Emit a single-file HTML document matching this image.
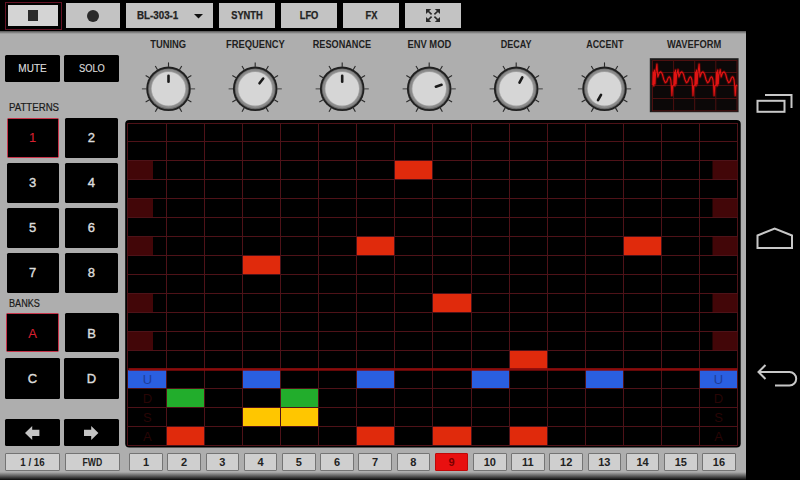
<!DOCTYPE html><html><head><meta charset="utf-8"><style>

html,body{margin:0;padding:0;}
body{width:800px;height:480px;background:#000;position:relative;overflow:hidden;font-family:"Liberation Sans", sans-serif;}
.abs{position:absolute;}
.panel{position:absolute;left:0;top:31px;width:746px;height:449px;background:#aeaeae;}
.tb{position:absolute;top:3px;height:25px;background:#c3c3c3;color:#222;font-weight:bold;font-size:10px;box-sizing:border-box;}
.tt{position:absolute;left:0;right:0;top:6px;text-align:center;line-height:13px;font-size:10px;-webkit-text-stroke:0.25px #222;}
.tt i{display:inline-block;font-style:normal;transform:scaleX(0.93);}
.lbl{position:absolute;top:37.5px;height:14px;width:100px;font-size:10px;font-weight:bold;color:#1e1e1e;text-align:center;line-height:14px;white-space:nowrap;}
.lbl span{display:inline-block;}
.bk{position:absolute;background:#000;color:#dcdcdc;-webkit-text-stroke:0.4px currentColor;border-radius:1.5px;box-sizing:border-box;}
.bt{position:absolute;left:0;right:0;text-align:center;}
.sec{position:absolute;font-size:10px;color:#1a1a1a;line-height:12px;-webkit-text-stroke:0.2px #1a1a1a;}
.sb{position:absolute;top:453.3px;height:18.2px;width:33.5px;background:#cfcfcf;border:1px solid #747474;box-sizing:border-box;border-radius:1px;font-size:11px;font-weight:bold;color:#222;}
.sb span{position:absolute;left:0;right:0;top:1.5px;text-align:center;line-height:12px;}

</style></head><body>
<div class="panel"></div>
<div class="abs" style="left:0;top:31px;width:746px;height:3px;background:linear-gradient(#555,#aeaeae);"></div>
<div class="abs" style="left:0;top:472px;width:746px;height:8px;background:linear-gradient(#aeaeae,#0a0a0a);"></div>
<div class="abs" style="left:4.5px;top:2px;width:57.5px;height:27.5px;box-sizing:border-box;border:1.6px solid #641224;background:#000;"></div>
<div class="abs" style="left:8px;top:5px;width:50px;height:21px;background:#d4d4d4;"></div>
<div class="abs" style="left:28px;top:10px;width:10px;height:11px;background:#2a2a2a;"></div>
<div class="tb" style="left:66px;width:54px;"><div class="abs" style="left:21px;top:6.5px;width:12px;height:12px;border-radius:50%;background:#2a2a2a;"></div></div>
<div class="tb" style="left:126px;width:87px;"><span class="abs" style="left:11px;top:6.2px;font-size:10.2px;line-height:13px;-webkit-text-stroke:0.25px #222;"><i style="display:inline-block;font-style:normal;transform:scaleX(0.96);transform-origin:0 0">BL-303-1</i></span><svg class="abs" style="left:68px;top:10.8px" width="9" height="5"><path d="M0 0H9L4.5 4.6Z" fill="#111"/></svg></div>
<div class="tb" style="left:219px;width:56px;"><div class="tt" style="left:0.8px"><i>SYNTH</i></div></div>
<div class="tb" style="left:281px;width:56px;"><div class="tt" style="left:0px"><i>LFO</i></div></div>
<div class="tb" style="left:343px;width:56px;"><div class="tt" style="left:0px"><i>FX</i></div></div>
<div class="tb" style="left:405px;width:56px;"><svg class="abs" style="left:21px;top:5.8px" width="14" height="13" viewBox="0 0 14 13"><g fill="#2a2a2a"><path d="M0 0H5.2L0 5Z"/><path d="M14 0H8.8L14 5Z"/><path d="M0 13H5.2L0 8Z"/><path d="M14 13H8.8L14 8Z"/></g><g stroke="#2a2a2a" stroke-width="1.7"><path d="M1.5 1.5L5.6 5.3M12.5 1.5L8.4 5.3M1.5 11.5L5.6 7.7M12.5 11.5L8.4 7.7"/></g></svg></div>
<div class="lbl" style="left:118.5px;"><span style="transform:scaleX(0.939)">TUNING</span></div>
<div class="lbl" style="left:205.2px;"><span style="transform:scaleX(0.939)">FREQUENCY</span></div>
<div class="lbl" style="left:292.2px;"><span style="transform:scaleX(0.914)">RESONANCE</span></div>
<div class="lbl" style="left:379.2px;"><span style="transform:scaleX(0.939)">ENV MOD</span></div>
<div class="lbl" style="left:466.20000000000005px;"><span style="transform:scaleX(0.903)">DECAY</span></div>
<div class="lbl" style="left:554.5px;"><span style="transform:scaleX(0.895)">ACCENT</span></div>
<div class="lbl" style="left:644.4px;"><span style="transform:scaleX(0.932)">WAVEFORM</span></div>
<svg class="abs" style="left:0;top:0" width="800" height="480"><line x1="157.50" y1="107.85" x2="155.30" y2="111.66" stroke="#2a2a2a" stroke-width="1.1"/><line x1="149.45" y1="99.80" x2="145.64" y2="102.00" stroke="#2a2a2a" stroke-width="1.1"/><line x1="146.30" y1="88.80" x2="141.90" y2="88.80" stroke="#6a6a6a" stroke-width="1.6"/><line x1="149.45" y1="77.80" x2="145.64" y2="75.60" stroke="#2a2a2a" stroke-width="1.1"/><line x1="157.50" y1="69.75" x2="155.30" y2="65.94" stroke="#2a2a2a" stroke-width="1.1"/><line x1="168.50" y1="66.80" x2="168.50" y2="62.40" stroke="#2a2a2a" stroke-width="1.1"/><line x1="179.50" y1="69.75" x2="181.70" y2="65.94" stroke="#2a2a2a" stroke-width="1.1"/><line x1="187.55" y1="77.80" x2="191.36" y2="75.60" stroke="#2a2a2a" stroke-width="1.1"/><line x1="190.70" y1="88.80" x2="195.10" y2="88.80" stroke="#6a6a6a" stroke-width="1.6"/><line x1="187.55" y1="99.80" x2="191.36" y2="102.00" stroke="#2a2a2a" stroke-width="1.1"/><line x1="179.50" y1="107.85" x2="181.70" y2="111.66" stroke="#2a2a2a" stroke-width="1.1"/><circle cx="168.5" cy="88.8" r="22.3" fill="#202020"/><circle cx="168.5" cy="88.8" r="20.4" fill="#6a6a6a"/><circle cx="168.5" cy="88.8" r="19.5" fill="#8a8a8a"/><circle cx="168.5" cy="88.8" r="17.6" fill="#a6a6a6"/><circle cx="168.5" cy="88.8" r="16.8" fill="#d6d6d6"/><line x1="168.50" y1="81.80" x2="168.50" y2="75.80" stroke="#1a1a1a" stroke-width="2.6" stroke-linecap="round"/><line x1="244.20" y1="107.85" x2="242.00" y2="111.66" stroke="#2a2a2a" stroke-width="1.1"/><line x1="236.15" y1="99.80" x2="232.34" y2="102.00" stroke="#2a2a2a" stroke-width="1.1"/><line x1="233.00" y1="88.80" x2="228.60" y2="88.80" stroke="#6a6a6a" stroke-width="1.6"/><line x1="236.15" y1="77.80" x2="232.34" y2="75.60" stroke="#2a2a2a" stroke-width="1.1"/><line x1="244.20" y1="69.75" x2="242.00" y2="65.94" stroke="#2a2a2a" stroke-width="1.1"/><line x1="255.20" y1="66.80" x2="255.20" y2="62.40" stroke="#2a2a2a" stroke-width="1.1"/><line x1="266.20" y1="69.75" x2="268.40" y2="65.94" stroke="#2a2a2a" stroke-width="1.1"/><line x1="274.25" y1="77.80" x2="278.06" y2="75.60" stroke="#2a2a2a" stroke-width="1.1"/><line x1="277.40" y1="88.80" x2="281.80" y2="88.80" stroke="#6a6a6a" stroke-width="1.6"/><line x1="274.25" y1="99.80" x2="278.06" y2="102.00" stroke="#2a2a2a" stroke-width="1.1"/><line x1="266.20" y1="107.85" x2="268.40" y2="111.66" stroke="#2a2a2a" stroke-width="1.1"/><circle cx="255.2" cy="88.8" r="22.3" fill="#202020"/><circle cx="255.2" cy="88.8" r="20.4" fill="#6a6a6a"/><circle cx="255.2" cy="88.8" r="19.5" fill="#8a8a8a"/><circle cx="255.2" cy="88.8" r="17.6" fill="#a6a6a6"/><circle cx="255.2" cy="88.8" r="16.8" fill="#d6d6d6"/><line x1="259.51" y1="83.28" x2="263.20" y2="78.56" stroke="#1a1a1a" stroke-width="2.6" stroke-linecap="round"/><line x1="331.20" y1="107.85" x2="329.00" y2="111.66" stroke="#2a2a2a" stroke-width="1.1"/><line x1="323.15" y1="99.80" x2="319.34" y2="102.00" stroke="#2a2a2a" stroke-width="1.1"/><line x1="320.00" y1="88.80" x2="315.60" y2="88.80" stroke="#6a6a6a" stroke-width="1.6"/><line x1="323.15" y1="77.80" x2="319.34" y2="75.60" stroke="#2a2a2a" stroke-width="1.1"/><line x1="331.20" y1="69.75" x2="329.00" y2="65.94" stroke="#2a2a2a" stroke-width="1.1"/><line x1="342.20" y1="66.80" x2="342.20" y2="62.40" stroke="#2a2a2a" stroke-width="1.1"/><line x1="353.20" y1="69.75" x2="355.40" y2="65.94" stroke="#2a2a2a" stroke-width="1.1"/><line x1="361.25" y1="77.80" x2="365.06" y2="75.60" stroke="#2a2a2a" stroke-width="1.1"/><line x1="364.40" y1="88.80" x2="368.80" y2="88.80" stroke="#6a6a6a" stroke-width="1.6"/><line x1="361.25" y1="99.80" x2="365.06" y2="102.00" stroke="#2a2a2a" stroke-width="1.1"/><line x1="353.20" y1="107.85" x2="355.40" y2="111.66" stroke="#2a2a2a" stroke-width="1.1"/><circle cx="342.2" cy="88.8" r="22.3" fill="#202020"/><circle cx="342.2" cy="88.8" r="20.4" fill="#6a6a6a"/><circle cx="342.2" cy="88.8" r="19.5" fill="#8a8a8a"/><circle cx="342.2" cy="88.8" r="17.6" fill="#a6a6a6"/><circle cx="342.2" cy="88.8" r="16.8" fill="#d6d6d6"/><line x1="342.20" y1="81.80" x2="342.20" y2="75.80" stroke="#1a1a1a" stroke-width="2.6" stroke-linecap="round"/><line x1="418.20" y1="107.85" x2="416.00" y2="111.66" stroke="#2a2a2a" stroke-width="1.1"/><line x1="410.15" y1="99.80" x2="406.34" y2="102.00" stroke="#2a2a2a" stroke-width="1.1"/><line x1="407.00" y1="88.80" x2="402.60" y2="88.80" stroke="#6a6a6a" stroke-width="1.6"/><line x1="410.15" y1="77.80" x2="406.34" y2="75.60" stroke="#2a2a2a" stroke-width="1.1"/><line x1="418.20" y1="69.75" x2="416.00" y2="65.94" stroke="#2a2a2a" stroke-width="1.1"/><line x1="429.20" y1="66.80" x2="429.20" y2="62.40" stroke="#2a2a2a" stroke-width="1.1"/><line x1="440.20" y1="69.75" x2="442.40" y2="65.94" stroke="#2a2a2a" stroke-width="1.1"/><line x1="448.25" y1="77.80" x2="452.06" y2="75.60" stroke="#2a2a2a" stroke-width="1.1"/><line x1="451.40" y1="88.80" x2="455.80" y2="88.80" stroke="#6a6a6a" stroke-width="1.6"/><line x1="448.25" y1="99.80" x2="452.06" y2="102.00" stroke="#2a2a2a" stroke-width="1.1"/><line x1="440.20" y1="107.85" x2="442.40" y2="111.66" stroke="#2a2a2a" stroke-width="1.1"/><circle cx="429.2" cy="88.8" r="22.3" fill="#202020"/><circle cx="429.2" cy="88.8" r="20.4" fill="#6a6a6a"/><circle cx="429.2" cy="88.8" r="19.5" fill="#8a8a8a"/><circle cx="429.2" cy="88.8" r="17.6" fill="#a6a6a6"/><circle cx="429.2" cy="88.8" r="16.8" fill="#d6d6d6"/><line x1="435.86" y1="86.64" x2="441.56" y2="84.78" stroke="#1a1a1a" stroke-width="2.6" stroke-linecap="round"/><line x1="505.20" y1="107.85" x2="503.00" y2="111.66" stroke="#2a2a2a" stroke-width="1.1"/><line x1="497.15" y1="99.80" x2="493.34" y2="102.00" stroke="#2a2a2a" stroke-width="1.1"/><line x1="494.00" y1="88.80" x2="489.60" y2="88.80" stroke="#6a6a6a" stroke-width="1.6"/><line x1="497.15" y1="77.80" x2="493.34" y2="75.60" stroke="#2a2a2a" stroke-width="1.1"/><line x1="505.20" y1="69.75" x2="503.00" y2="65.94" stroke="#2a2a2a" stroke-width="1.1"/><line x1="516.20" y1="66.80" x2="516.20" y2="62.40" stroke="#2a2a2a" stroke-width="1.1"/><line x1="527.20" y1="69.75" x2="529.40" y2="65.94" stroke="#2a2a2a" stroke-width="1.1"/><line x1="535.25" y1="77.80" x2="539.06" y2="75.60" stroke="#2a2a2a" stroke-width="1.1"/><line x1="538.40" y1="88.80" x2="542.80" y2="88.80" stroke="#6a6a6a" stroke-width="1.6"/><line x1="535.25" y1="99.80" x2="539.06" y2="102.00" stroke="#2a2a2a" stroke-width="1.1"/><line x1="527.20" y1="107.85" x2="529.40" y2="111.66" stroke="#2a2a2a" stroke-width="1.1"/><circle cx="516.2" cy="88.8" r="22.3" fill="#202020"/><circle cx="516.2" cy="88.8" r="20.4" fill="#6a6a6a"/><circle cx="516.2" cy="88.8" r="19.5" fill="#8a8a8a"/><circle cx="516.2" cy="88.8" r="17.6" fill="#a6a6a6"/><circle cx="516.2" cy="88.8" r="16.8" fill="#d6d6d6"/><line x1="519.49" y1="82.62" x2="522.30" y2="77.32" stroke="#1a1a1a" stroke-width="2.6" stroke-linecap="round"/><line x1="593.50" y1="107.85" x2="591.30" y2="111.66" stroke="#2a2a2a" stroke-width="1.1"/><line x1="585.45" y1="99.80" x2="581.64" y2="102.00" stroke="#2a2a2a" stroke-width="1.1"/><line x1="582.30" y1="88.80" x2="577.90" y2="88.80" stroke="#6a6a6a" stroke-width="1.6"/><line x1="585.45" y1="77.80" x2="581.64" y2="75.60" stroke="#2a2a2a" stroke-width="1.1"/><line x1="593.50" y1="69.75" x2="591.30" y2="65.94" stroke="#2a2a2a" stroke-width="1.1"/><line x1="604.50" y1="66.80" x2="604.50" y2="62.40" stroke="#2a2a2a" stroke-width="1.1"/><line x1="615.50" y1="69.75" x2="617.70" y2="65.94" stroke="#2a2a2a" stroke-width="1.1"/><line x1="623.55" y1="77.80" x2="627.36" y2="75.60" stroke="#2a2a2a" stroke-width="1.1"/><line x1="626.70" y1="88.80" x2="631.10" y2="88.80" stroke="#6a6a6a" stroke-width="1.6"/><line x1="623.55" y1="99.80" x2="627.36" y2="102.00" stroke="#2a2a2a" stroke-width="1.1"/><line x1="615.50" y1="107.85" x2="617.70" y2="111.66" stroke="#2a2a2a" stroke-width="1.1"/><circle cx="604.5" cy="88.8" r="22.3" fill="#202020"/><circle cx="604.5" cy="88.8" r="20.4" fill="#6a6a6a"/><circle cx="604.5" cy="88.8" r="19.5" fill="#8a8a8a"/><circle cx="604.5" cy="88.8" r="17.6" fill="#a6a6a6"/><circle cx="604.5" cy="88.8" r="16.8" fill="#d6d6d6"/><line x1="601.00" y1="94.86" x2="598.00" y2="100.06" stroke="#1a1a1a" stroke-width="2.6" stroke-linecap="round"/><rect x="649.8" y="58.2" width="88.8" height="54" fill="#1e1e1e"/><rect x="651.5" y="59.8" width="86" height="51" fill="#0c0808"/><rect x="652.5" y="60.5" width="84.5" height="50.3" fill="none" stroke="#4e1010" stroke-width="1"/><line x1="673.6" y1="60.5" x2="673.6" y2="110.8" stroke="#4e1010" stroke-width="1"/><line x1="694.7" y1="60.5" x2="694.7" y2="110.8" stroke="#4e1010" stroke-width="1"/><line x1="715.8" y1="60.5" x2="715.8" y2="110.8" stroke="#4e1010" stroke-width="1"/><line x1="652.5" y1="72.5" x2="737" y2="72.5" stroke="#4e1010" stroke-width="1"/><line x1="652.5" y1="85.5" x2="737" y2="85.5" stroke="#4e1010" stroke-width="1"/><line x1="652.5" y1="98.5" x2="737" y2="98.5" stroke="#4e1010" stroke-width="1"/><polyline points="652.80,85.00 653.30,72.00 653.80,86.00 654.40,70.00 655.00,84.00 655.40,76.00 656.90,64.00 657.80,77.00 659.30,72.80 660.80,71.80 662.30,74.00 663.80,79.50 665.30,82.80 666.80,81.50 668.10,78.00 669.10,76.80 670.00,77.50 670.80,80.00 671.40,86.00 671.90,95.60 672.60,86.00 673.90,85.00 674.40,72.00 674.90,86.00 675.50,70.00 676.10,84.00 676.50,76.00 678.00,69.50 678.90,77.00 680.40,72.80 681.90,71.80 683.40,74.00 684.90,79.50 686.40,82.80 687.90,81.50 689.20,78.00 690.20,76.80 691.10,77.50 691.90,80.00 692.50,86.00 693.00,95.60 693.70,86.00 695.00,85.00 695.50,72.00 696.00,86.00 696.60,70.00 697.20,84.00 697.60,76.00 699.10,64.00 700.00,77.00 701.50,72.80 703.00,71.80 704.50,74.00 706.00,79.50 707.50,82.80 709.00,81.50 710.30,78.00 711.30,76.80 712.20,77.50 713.00,80.00 713.60,86.00 714.10,95.60 714.80,86.00 716.10,85.00 716.60,72.00 717.10,86.00 717.70,70.00 718.30,84.00 718.70,76.00 720.20,69.50 721.10,77.00 722.60,72.80 724.10,71.80 725.60,74.00 727.10,79.50 728.60,82.80 730.10,81.50 731.40,78.00 732.40,76.80 733.30,77.50 734.10,80.00 734.70,86.00 735.20,95.60 735.90,86.00 737.20,85.00" fill="none" stroke="#ff0000" stroke-opacity="0.25" stroke-width="3" stroke-linejoin="round"/><polyline points="652.80,85.00 653.30,72.00 653.80,86.00 654.40,70.00 655.00,84.00 655.40,76.00 656.90,64.00 657.80,77.00 659.30,72.80 660.80,71.80 662.30,74.00 663.80,79.50 665.30,82.80 666.80,81.50 668.10,78.00 669.10,76.80 670.00,77.50 670.80,80.00 671.40,86.00 671.90,95.60 672.60,86.00 673.90,85.00 674.40,72.00 674.90,86.00 675.50,70.00 676.10,84.00 676.50,76.00 678.00,69.50 678.90,77.00 680.40,72.80 681.90,71.80 683.40,74.00 684.90,79.50 686.40,82.80 687.90,81.50 689.20,78.00 690.20,76.80 691.10,77.50 691.90,80.00 692.50,86.00 693.00,95.60 693.70,86.00 695.00,85.00 695.50,72.00 696.00,86.00 696.60,70.00 697.20,84.00 697.60,76.00 699.10,64.00 700.00,77.00 701.50,72.80 703.00,71.80 704.50,74.00 706.00,79.50 707.50,82.80 709.00,81.50 710.30,78.00 711.30,76.80 712.20,77.50 713.00,80.00 713.60,86.00 714.10,95.60 714.80,86.00 716.10,85.00 716.60,72.00 717.10,86.00 717.70,70.00 718.30,84.00 718.70,76.00 720.20,69.50 721.10,77.00 722.60,72.80 724.10,71.80 725.60,74.00 727.10,79.50 728.60,82.80 730.10,81.50 731.40,78.00 732.40,76.80 733.30,77.50 734.10,80.00 734.70,86.00 735.20,95.60 735.90,86.00 737.20,85.00" fill="none" stroke="#e01414" stroke-width="1.1" stroke-linejoin="round"/></svg>
<div class="bk" style="left:5px;top:55px;width:55px;height:27px;font-size:10px;-webkit-text-stroke:0.15px currentColor;"><div class="bt" style="top:7px;line-height:13px;">MUTE</div></div>
<div class="bk" style="left:64px;top:55px;width:55px;height:27px;font-size:10px;-webkit-text-stroke:0.15px currentColor;"><div class="bt" style="top:7px;line-height:13px;"><i style="display:inline-block;font-style:normal;transform:scaleX(0.93)">SOLO</i></div></div>
<div class="sec" style="left:8.5px;top:101.5px;"><span style="display:inline-block;transform:scaleX(0.965);transform-origin:0 0">PATTERNS</span></div>
<div class="bk" style="left:6.5px;top:117.5px;width:52px;height:40px;border:1px solid #c8344a;color:#d82030;-webkit-text-stroke:0.1px currentColor;font-size:13px;"><div class="bt" style="top:11.5px;line-height:16px;">1</div></div>
<div class="bk" style="left:65.2px;top:117.5px;width:52.5px;height:40px;font-size:13px;"><div class="bt" style="top:12px;line-height:16px;">2</div></div>
<div class="bk" style="left:6.5px;top:162.5px;width:52px;height:40px;font-size:13px;"><div class="bt" style="top:12px;line-height:16px;">3</div></div>
<div class="bk" style="left:65.2px;top:162.5px;width:52.5px;height:40px;font-size:13px;"><div class="bt" style="top:12px;line-height:16px;">4</div></div>
<div class="bk" style="left:6.5px;top:207.5px;width:52px;height:40px;font-size:13px;"><div class="bt" style="top:12px;line-height:16px;">5</div></div>
<div class="bk" style="left:65.2px;top:207.5px;width:52.5px;height:40px;font-size:13px;"><div class="bt" style="top:12px;line-height:16px;">6</div></div>
<div class="bk" style="left:6.5px;top:252.5px;width:52px;height:40px;font-size:13px;"><div class="bt" style="top:12px;line-height:16px;">7</div></div>
<div class="bk" style="left:65.2px;top:252.5px;width:52.5px;height:40px;font-size:13px;"><div class="bt" style="top:12px;line-height:16px;">8</div></div>
<div class="sec" style="left:8.5px;top:298px;"><span style="display:inline-block;transform:scaleX(0.91);transform-origin:0 0">BANKS</span></div>
<div class="bk" style="left:6px;top:312.5px;width:53px;height:39.5px;border:1px solid #c8344a;color:#d82030;-webkit-text-stroke:0.1px currentColor;font-size:13px;"><div class="bt" style="top:12px;line-height:16px;">A</div></div>
<div class="bk" style="left:64.5px;top:312.5px;width:54px;height:39.5px;font-size:13px;"><div class="bt" style="top:13px;line-height:16px;">B</div></div>
<div class="bk" style="left:5px;top:357.5px;width:55px;height:41px;font-size:13px;"><div class="bt" style="top:13.5px;line-height:16px;">C</div></div>
<div class="bk" style="left:64px;top:357.5px;width:55px;height:41px;font-size:13px;"><div class="bt" style="top:13.5px;line-height:16px;">D</div></div>
<div class="bk" style="left:5px;top:419px;width:55px;height:26.5px;"><svg class="abs" style="left:20.3px;top:6.5px" width="15" height="15" viewBox="0 0 15 15"><path d="M0 7L7.2 0V3.8H14.4V10H7.2V14.1Z" fill="#c4c4c4"/></svg></div>
<div class="bk" style="left:64px;top:419px;width:55px;height:26.5px;"><svg class="abs" style="left:20.4px;top:6.5px" width="15" height="15" viewBox="0 0 15 15"><path d="M14.4 7L7.2 0V3.8H0V10H7.2V14.1Z" fill="#c4c4c4"/></svg></div>
<div class="sb" style="left:5px;width:55px;"><span style="top:1.3px;font-size:10.8px;"><i style="display:inline-block;font-style:normal;transform:scaleX(0.9)">1 / 16</i></span></div>
<div class="sb" style="left:64.5px;width:55px;"><span style="top:1.3px;font-size:10.8px;"><i style="display:inline-block;font-style:normal;transform:scaleX(0.8)">FWD</i></span></div>
<svg class="abs" style="left:0;top:0" width="800" height="480"><rect x="125.2" y="120" width="615.5" height="327.4" rx="4" fill="#000"/><line x1="127.5" y1="123.00" x2="127.5" y2="445.5" stroke="#4e1218" stroke-width="1"/><line x1="166.5" y1="123.00" x2="166.5" y2="445.5" stroke="#4e1218" stroke-width="1"/><line x1="204.5" y1="123.00" x2="204.5" y2="445.5" stroke="#4e1218" stroke-width="1"/><line x1="242.5" y1="123.00" x2="242.5" y2="445.5" stroke="#4e1218" stroke-width="1"/><line x1="280.5" y1="123.00" x2="280.5" y2="445.5" stroke="#4e1218" stroke-width="1"/><line x1="318.5" y1="123.00" x2="318.5" y2="445.5" stroke="#4e1218" stroke-width="1"/><line x1="356.5" y1="123.00" x2="356.5" y2="445.5" stroke="#4e1218" stroke-width="1"/><line x1="394.5" y1="123.00" x2="394.5" y2="445.5" stroke="#4e1218" stroke-width="1"/><line x1="432.5" y1="123.00" x2="432.5" y2="445.5" stroke="#4e1218" stroke-width="1"/><line x1="471.5" y1="123.00" x2="471.5" y2="445.5" stroke="#4e1218" stroke-width="1"/><line x1="509.5" y1="123.00" x2="509.5" y2="445.5" stroke="#4e1218" stroke-width="1"/><line x1="547.5" y1="123.00" x2="547.5" y2="445.5" stroke="#4e1218" stroke-width="1"/><line x1="585.5" y1="123.00" x2="585.5" y2="445.5" stroke="#4e1218" stroke-width="1"/><line x1="623.5" y1="123.00" x2="623.5" y2="445.5" stroke="#4e1218" stroke-width="1"/><line x1="661.5" y1="123.00" x2="661.5" y2="445.5" stroke="#4e1218" stroke-width="1"/><line x1="699.5" y1="123.00" x2="699.5" y2="445.5" stroke="#4e1218" stroke-width="1"/><line x1="737.5" y1="123.00" x2="737.5" y2="445.5" stroke="#4e1218" stroke-width="1"/><line x1="127.5" y1="123.5" x2="737.5" y2="123.5" stroke="#4e1218" stroke-width="1"/><line x1="127.5" y1="141.5" x2="737.5" y2="141.5" stroke="#4e1218" stroke-width="1"/><line x1="127.5" y1="160.5" x2="737.5" y2="160.5" stroke="#4e1218" stroke-width="1"/><line x1="127.5" y1="179.5" x2="737.5" y2="179.5" stroke="#4e1218" stroke-width="1"/><line x1="127.5" y1="198.5" x2="737.5" y2="198.5" stroke="#4e1218" stroke-width="1"/><line x1="127.5" y1="217.5" x2="737.5" y2="217.5" stroke="#4e1218" stroke-width="1"/><line x1="127.5" y1="236.5" x2="737.5" y2="236.5" stroke="#4e1218" stroke-width="1"/><line x1="127.5" y1="255.5" x2="737.5" y2="255.5" stroke="#4e1218" stroke-width="1"/><line x1="127.5" y1="274.5" x2="737.5" y2="274.5" stroke="#4e1218" stroke-width="1"/><line x1="127.5" y1="293.5" x2="737.5" y2="293.5" stroke="#4e1218" stroke-width="1"/><line x1="127.5" y1="312.5" x2="737.5" y2="312.5" stroke="#4e1218" stroke-width="1"/><line x1="127.5" y1="331.5" x2="737.5" y2="331.5" stroke="#4e1218" stroke-width="1"/><line x1="127.5" y1="350.5" x2="737.5" y2="350.5" stroke="#4e1218" stroke-width="1"/><line x1="127.5" y1="388.5" x2="737.5" y2="388.5" stroke="#4e1218" stroke-width="1"/><line x1="127.5" y1="407.5" x2="737.5" y2="407.5" stroke="#4e1218" stroke-width="1"/><line x1="127.5" y1="426.5" x2="737.5" y2="426.5" stroke="#4e1218" stroke-width="1"/><line x1="127.5" y1="445.5" x2="737.5" y2="445.5" stroke="#4e1218" stroke-width="1"/><rect x="128" y="161.00" width="25" height="18.00" fill="#420608"/><rect x="712.5" y="161.00" width="25" height="18.00" fill="#420608"/><rect x="128" y="199.00" width="25" height="18.00" fill="#420608"/><rect x="712.5" y="199.00" width="25" height="18.00" fill="#420608"/><rect x="128" y="237.00" width="25" height="18.00" fill="#420608"/><rect x="712.5" y="237.00" width="25" height="18.00" fill="#420608"/><rect x="128" y="294.00" width="25" height="18.00" fill="#420608"/><rect x="712.5" y="294.00" width="25" height="18.00" fill="#420608"/><rect x="128" y="332.00" width="25" height="18.00" fill="#420608"/><rect x="712.5" y="332.00" width="25" height="18.00" fill="#420608"/><rect x="395.00" y="161.00" width="37.00" height="18.00" fill="#e02a0c"/><rect x="357.00" y="237.00" width="37.00" height="18.00" fill="#e02a0c"/><rect x="624.00" y="237.00" width="37.00" height="18.00" fill="#e02a0c"/><rect x="243.00" y="256.00" width="37.00" height="18.00" fill="#e02a0c"/><rect x="433.00" y="294.00" width="38.00" height="18.00" fill="#e02a0c"/><rect x="510.00" y="351.00" width="37.00" height="18.00" fill="#e02a0c"/><rect x="128.00" y="370.00" width="38.00" height="18.00" fill="#2a5fe0"/><rect x="243.00" y="370.00" width="37.00" height="18.00" fill="#2a5fe0"/><rect x="357.00" y="370.00" width="37.00" height="18.00" fill="#2a5fe0"/><rect x="472.00" y="370.00" width="37.00" height="18.00" fill="#2a5fe0"/><rect x="586.00" y="370.00" width="37.00" height="18.00" fill="#2a5fe0"/><rect x="700.00" y="370.00" width="37.00" height="18.00" fill="#2a5fe0"/><rect x="167.00" y="389.00" width="37.00" height="18.00" fill="#22ad2c"/><rect x="281.00" y="389.00" width="37.00" height="18.00" fill="#22ad2c"/><rect x="243.00" y="408.00" width="37.00" height="18.00" fill="#ffc600"/><rect x="281.00" y="408.00" width="37.00" height="18.00" fill="#ffc600"/><rect x="167.00" y="427.00" width="37.00" height="18.00" fill="#e02a0c"/><rect x="357.00" y="427.00" width="37.00" height="18.00" fill="#e02a0c"/><rect x="433.00" y="427.00" width="38.00" height="18.00" fill="#e02a0c"/><rect x="510.00" y="427.00" width="37.00" height="18.00" fill="#e02a0c"/><rect x="128.40" y="368.12" width="609.12" height="2.6" fill="#8a0c0c"/><text x="147.44" y="383.82" font-family="Liberation Sans" font-size="13" fill="#1e3c98" text-anchor="middle">U</text><text x="718.48" y="383.82" font-family="Liberation Sans" font-size="13" fill="#1e3c98" text-anchor="middle">U</text><text x="147.44" y="402.85" font-family="Liberation Sans" font-size="13" fill="#280505" text-anchor="middle">D</text><text x="718.48" y="402.85" font-family="Liberation Sans" font-size="13" fill="#280505" text-anchor="middle">D</text><text x="147.44" y="421.88" font-family="Liberation Sans" font-size="13" fill="#280505" text-anchor="middle">S</text><text x="718.48" y="421.88" font-family="Liberation Sans" font-size="13" fill="#280505" text-anchor="middle">S</text><text x="147.44" y="440.90" font-family="Liberation Sans" font-size="13" fill="#280505" text-anchor="middle">A</text><text x="718.48" y="440.90" font-family="Liberation Sans" font-size="13" fill="#280505" text-anchor="middle">A</text></svg>
<div class="sb" style="left:129.20px;"><span>1</span></div>
<div class="sb" style="left:167.40px;"><span>2</span></div>
<div class="sb" style="left:205.60px;"><span>3</span></div>
<div class="sb" style="left:243.80px;"><span>4</span></div>
<div class="sb" style="left:282.00px;"><span>5</span></div>
<div class="sb" style="left:320.20px;"><span>6</span></div>
<div class="sb" style="left:358.40px;"><span>7</span></div>
<div class="sb" style="left:396.60px;"><span>8</span></div>
<div class="sb" style="left:434.80px;background:#e81010;border-color:#c00808;color:#7a0000;"><span>9</span></div>
<div class="sb" style="left:473.00px;"><span>10</span></div>
<div class="sb" style="left:511.20px;"><span>11</span></div>
<div class="sb" style="left:549.40px;"><span>12</span></div>
<div class="sb" style="left:587.60px;"><span>13</span></div>
<div class="sb" style="left:625.80px;"><span>14</span></div>
<div class="sb" style="left:664.00px;"><span>15</span></div>
<div class="sb" style="left:702.20px;"><span>16</span></div>
<svg class="abs" style="left:746px;top:0" width="54" height="480" viewBox="746 0 54 480">
<g fill="none" stroke="#c8c8c8" stroke-width="2">
<rect x="757.5" y="100.8" width="27" height="11"/>
<path d="M765 95H791.5V108"/>
<path d="M757.5 248V235.5L774.7 228.5L792 235.5V248Z"/>
<path d="M765.5 365L758.5 372L765.5 379M758.5 372H789.5A6.7 6.7 0 0 1 789.5 385.4H775"/>
</g></svg>
</body></html>
